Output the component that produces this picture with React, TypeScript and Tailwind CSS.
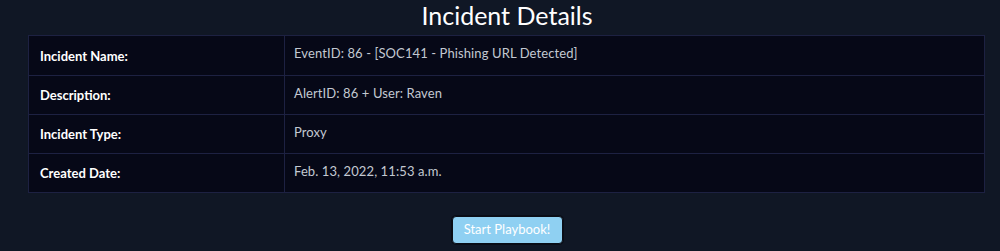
export default function App() {
  const rows: [string, string][] = [
    ["Incident Name:", "EventID: 86 - [SOC141 - Phishing URL Detected]"],
    ["Description:", "AlertID: 86 + User: Raven"],
    ["Incident Type:", "Proxy"],
    ["Created Date:", "Feb. 13, 2022, 11:53 a.m."],
  ];
  return (
    <div
      className="w-[1000px] h-[251px] bg-[#101725] flex flex-col items-center overflow-hidden"
      style={{ fontFamily: "Lato, 'Noto Sans', sans-serif" }}
    >
      <h1 className="text-[25px] leading-[28px] text-white pt-[1px] h-[35px] ml-[14px]">
        Incident Details
      </h1>
      <div className="w-[957px] ml-[28px] self-start bg-[#060817] border border-[#1d2142] flex flex-col">
        {rows.map(([k, v], i) => (
          <div
            key={k}
            className={`flex h-[39px] ${i > 0 ? "border-t border-[#1d2142]" : ""}`}
          >
            <div className="w-[256px] border-r border-[#1d2142] flex items-center pl-[11px] pt-[2px] text-[13px] font-bold text-white">
              {k}
            </div>
            <div className="flex-1 flex items-start pt-[8px] pl-[9px] text-[13px] text-[#c3c8d2] tracking-[0.1px]">
              {v}
            </div>
          </div>
        ))}
      </div>
      <button className="mt-[23px] ml-[14px] w-[111px] h-[28px] rounded-[4px] bg-[#8fd0f2] text-white text-[13px] border border-[#0a0d16] shadow-[0_0_0_1px_#0a0d16] flex items-center justify-center">
        Start Playbook!
      </button>
    </div>
  );
}
